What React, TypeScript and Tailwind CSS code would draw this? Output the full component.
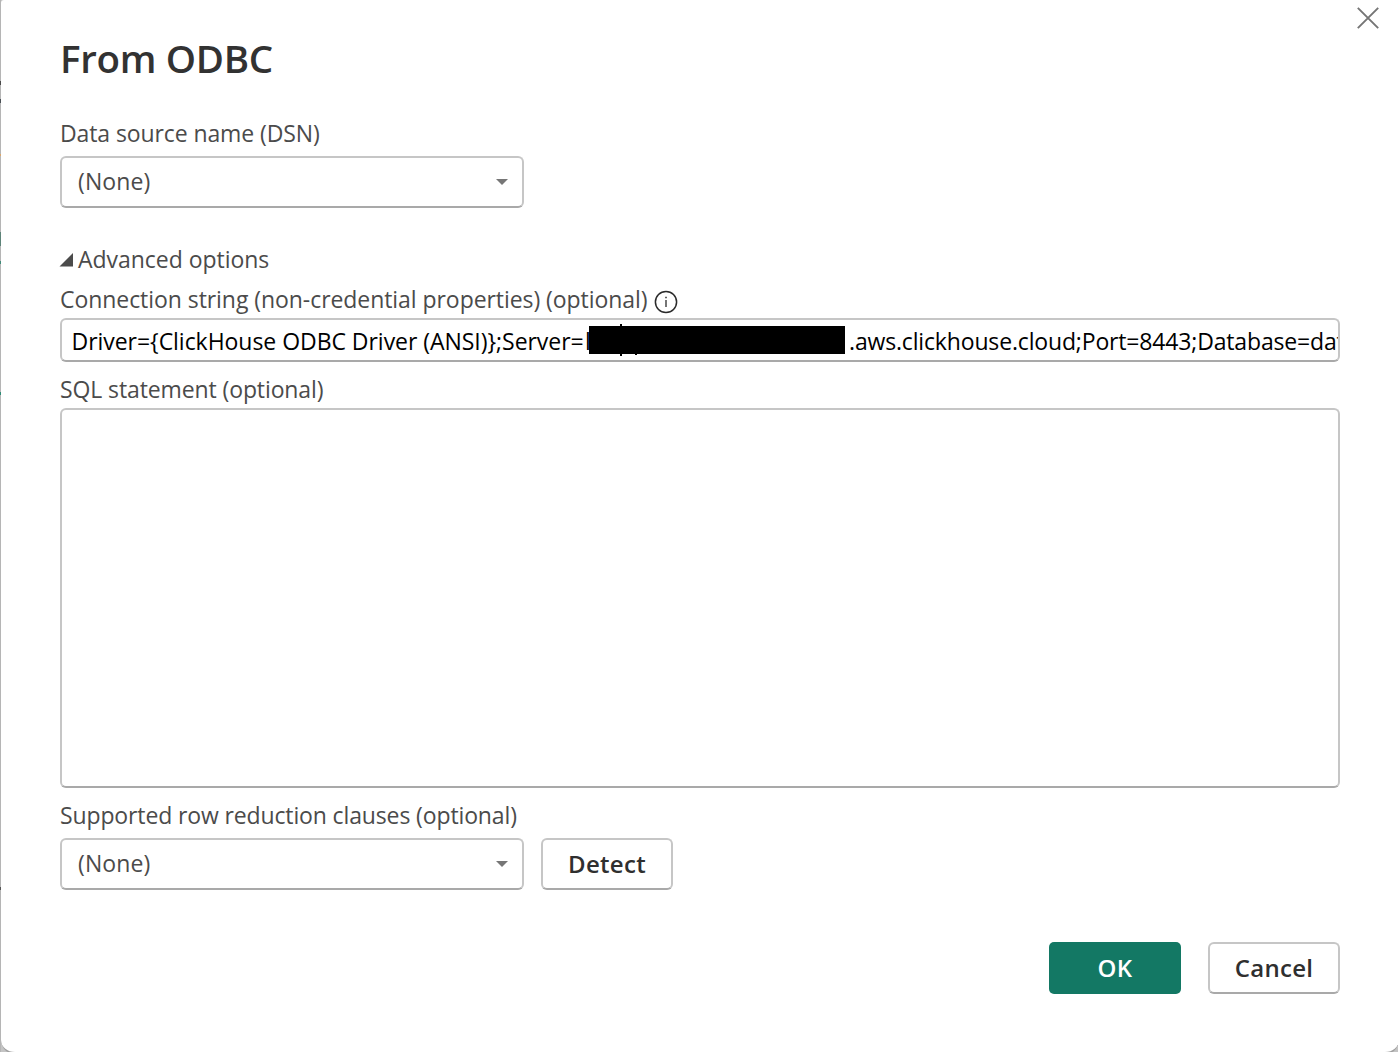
import type { ReactNode } from "react";

const frame =
  "rounded-[6px] border-2 border-[#c6c6c6] border-b-[#a9a9a9] bg-white";

function Label({ className = "", children }: { className?: string; children: ReactNode }) {
  return (
    <div className={`flex h-8 items-center whitespace-pre text-[23px] leading-8 text-[#4b4b4b] ${className}`}>
      {children}
    </div>
  );
}

function Select({ value }: { value: string }) {
  return (
    <button className={`flex h-[52px] w-[464px] items-center justify-between pl-4 pr-3.5 ${frame}`}>
      <span className="pb-0.5 text-[23px] leading-8 tracking-[0.1px] text-[#4b4b4b]">{value}</span>
      <svg width="12" height="6" viewBox="0 0 12 6" className="fill-[#767676]">
        <path d="M0 0h12L6 6z" />
      </svg>
    </button>
  );
}

function Button({ primary = false, children }: { primary?: boolean; children: ReactNode }) {
  return (
    <button
      className={`flex h-[52px] w-[132px] items-center justify-center text-[24px] font-semibold leading-8 tracking-[0.3px] ${
        primary ? "rounded-[5px] bg-[#137864] text-white" : `text-[#2f2f2f] ${frame}`
      }`}
    >
      {children}
    </button>
  );
}

/* Sliver of the page that shows past the dialog's left edge */
function BackdropSliver() {
  return (
    <div className="flex w-px shrink-0 flex-col bg-[#b5b5b5]">
      <div className="mt-[81px] h-1 shrink-0 bg-[#4a4a4a]" />
      <div className="mt-[14px] h-1 shrink-0 bg-[#4a5055]" />
      <div className="mt-[51px] h-0.5 shrink-0 bg-[#d9a66c]" />
      <div className="mt-[76px] h-[14px] shrink-0 bg-[#5d8378]" />
      <div className="mt-[15px] h-[3px] shrink-0 bg-[#3f8a78]" />
      <div className="mt-[128px] h-[3px] shrink-0 bg-[#2e8b75]" />
      <div className="mt-[492px] h-[3px] shrink-0 bg-[#555555]" />
    </div>
  );
}

export default function App() {
  return (
    <div className="flex h-[1052px] w-[1398px] overflow-hidden bg-[#c4c4c4] font-['Open_Sans',sans-serif]">
      <BackdropSliver />
      <main className="relative flex h-[1054px] w-[1398px] shrink-0 flex-col rounded-b-[14px] rounded-tl-[3px] border-b-2 border-[#a0a0a0] bg-white pl-[59px] pr-[59px]">
        <button aria-label="Close" className="absolute left-[1356px] top-[7px]">
          <svg width="22" height="22" viewBox="0 0 22 22" className="fill-none stroke-[#757575]" strokeWidth="1.9">
            <path d="M.8.8l20.4 20.4M21.2.8L.8 21.2" />
          </svg>
        </button>

        <h1 className="mt-[34px] h-12 whitespace-pre text-[38.5px] font-semibold leading-[48px] tracking-[-0.3px] text-[#323232]">
          From ODBC
        </h1>

        <Label className="mt-[35px] tracking-[-0.1px]">Data source name (DSN)</Label>
        <div className="mt-[7px] flex">
          <Select value="(None)" />
        </div>

        <Label className="mt-[35px] tracking-[-0.03px]">
          <svg width="14" height="14" viewBox="0 0 14 14" className="-ml-px mr-[5px] mt-0.5 fill-[#4b4b4b]">
            <path d="M14 0v13.5H.5z" />
          </svg>
          Advanced options
        </Label>

        <Label className="mt-2 tracking-[-0.06px]">
          Connection string (non-credential properties) (optional)
          <svg width="24" height="24" viewBox="0 0 24 24" className="ml-[6.7px] mt-1.5 fill-none stroke-[#2b2b2b]">
            <circle cx="12" cy="12" r="10.6" strokeWidth="1.5" />
            <path d="M12 10v7" strokeWidth="1.3" />
            <path d="M12 6.7v1.6" strokeWidth="1.5" />
          </svg>
        </Label>
        <div className={`mt-[3px] flex h-11 w-[1280px] shrink-0 items-center overflow-hidden whitespace-pre pl-[9.5px] pt-0.5 text-[23px] leading-8 text-black ${frame}`}>
          <span className="w-[513.5px] shrink-0 tracking-[-0.04px]">{"Driver={ClickHouse ODBC Driver (ANSI)};Server="}</span>
          <span className="relative flex w-[264px] shrink-0">
            <span>l</span>
            <span className="absolute left-[35px] top-[-1px] h-8 w-0.5 bg-black" />
            <span className="absolute left-[50px] top-[27px] h-[3px] w-0.5 bg-black" />
            <span className="absolute left-1 top-px h-7 w-64 bg-black" />
          </span>
          <span className="shrink-0 tracking-[-0.16px]">.aws.clickhouse.cloud;Port=8443;Database=data</span>
        </div>

        <Label className="mt-[11px] tracking-[-0.11px]">SQL statement (optional)</Label>
        <textarea className={`mt-[3px] block h-[380px] w-[1280px] shrink-0 resize-none ${frame}`} />

        <Label className="mt-[11px] tracking-[-0.13px]">Supported row reduction clauses (optional)</Label>
        <div className="mt-[7px] flex gap-[17px]">
          <Select value="(None)" />
          <Button>Detect</Button>
        </div>

        <div className="mt-[52px] flex justify-end gap-[27px]">
          <Button primary>OK</Button>
          <Button>Cancel</Button>
        </div>
      </main>
    </div>
  );
}
